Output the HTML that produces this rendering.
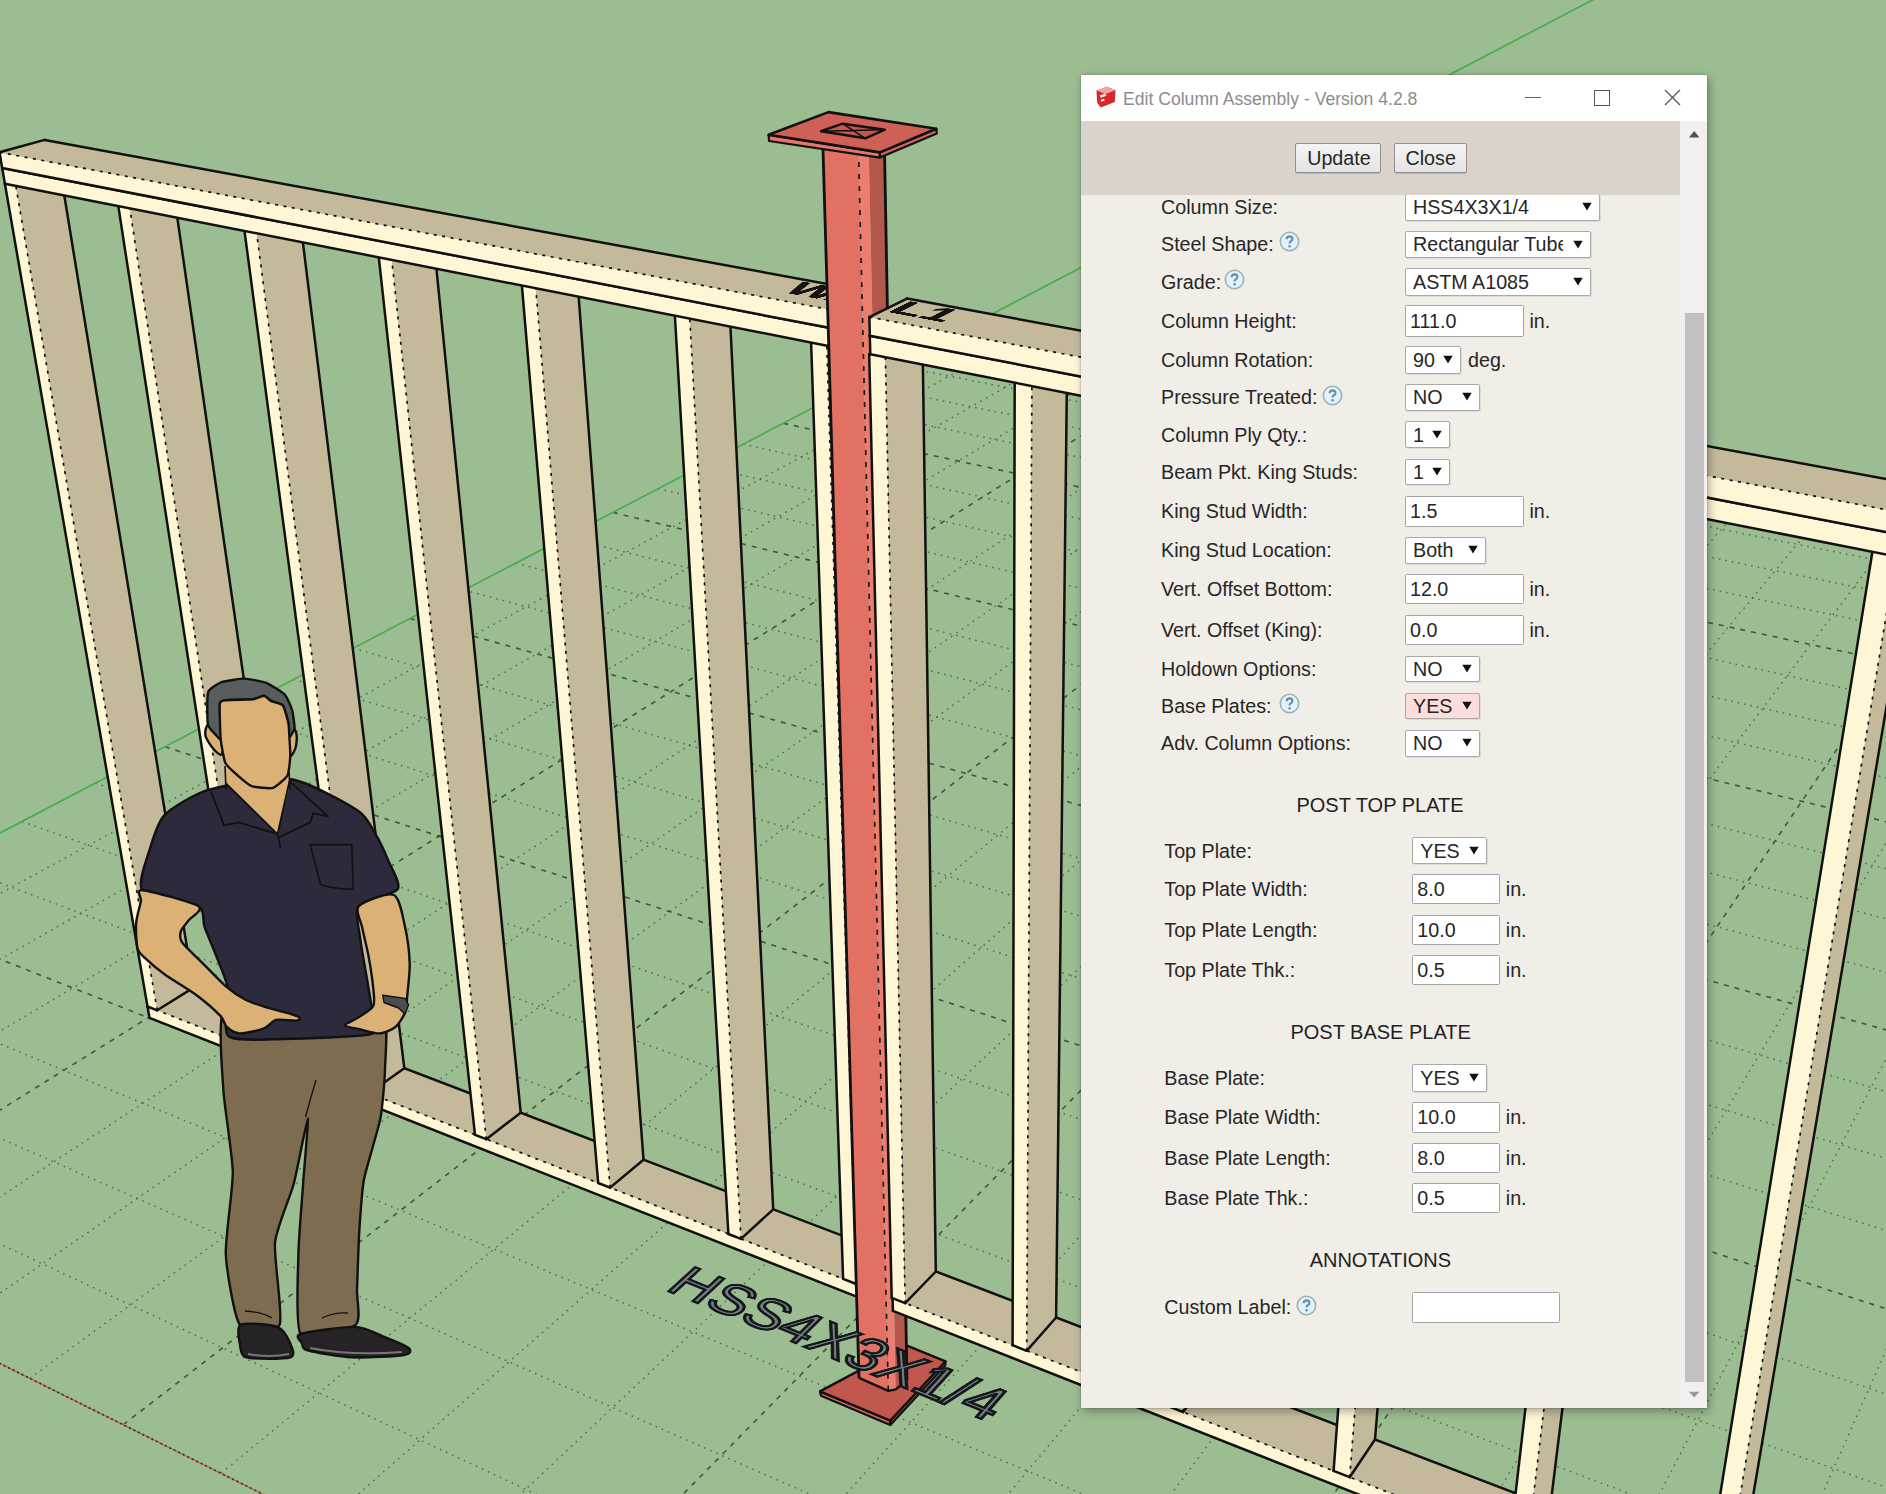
<!DOCTYPE html>
<html><head><meta charset="utf-8">
<style>
html,body{margin:0;padding:0;}
body{width:1886px;height:1494px;overflow:hidden;position:relative;background:#9cbc92;font-family:"Liberation Sans",sans-serif;}
#scene{position:absolute;left:0;top:0;}
.t3{position:absolute;left:0;top:0;transform-origin:0 0;white-space:nowrap;font-family:"Liberation Sans",sans-serif;}
.clipw{position:absolute;left:0;top:0;width:1886px;height:1494px;}
.ab{position:absolute;}
.t{position:absolute;white-space:nowrap;font-family:"Liberation Sans",sans-serif;}
#dlg-shadow{position:absolute;left:1081px;top:75px;width:626px;height:1333px;box-shadow:2px 3px 9px rgba(0,0,0,0.32),0 0 1.5px rgba(0,0,0,0.35);}
#dlg{position:absolute;left:1081px;top:75px;width:626px;height:1333px;background:#f1ede7;}
#titlebar{position:absolute;left:0;top:0;width:626px;height:46px;background:#fff;}
#hdr{position:absolute;left:1081px;top:121px;width:599px;height:74px;background:#dbd3c9;}
.btn{position:absolute;box-sizing:border-box;border:1px solid #8f8f8f;border-radius:2px;background:linear-gradient(#f4f4f4,#e4e4e4);box-shadow:0 1px 0 rgba(0,0,0,0.12);}
#body-clip{position:absolute;left:0;top:0;width:1886px;height:1494px;clip-path:inset(195px 206px 87px 1081px);}
.sel{position:absolute;box-sizing:border-box;border:1px solid #a9a9a9;border-radius:2px;box-shadow:1px 1px 0 rgba(0,0,0,0.08);}
.inp{position:absolute;box-sizing:border-box;border:1.3px solid #a3a3a3;border-radius:1.5px;background:#fff;}
#sbtrack{position:absolute;left:1680px;top:121px;width:27px;height:1287px;background:#f0f0f0;}
#sbthumb{position:absolute;left:1684.5px;top:313px;width:19.5px;height:1069px;background:#c1c1c1;}
</style></head><body>
<svg id="scene" width="1886" height="1494" viewBox="0 0 1886 1494">
<line x1="-451.1" y1="1139.4" x2="982.9" y2="357.8" stroke="#3a5a36" stroke-width="1.5" stroke-dasharray="1.6 5" opacity="0.75"/>
<line x1="-379.2" y1="1175.1" x2="1038.4" y2="368.5" stroke="#3a5a36" stroke-width="1.5" stroke-dasharray="1.6 5" opacity="0.75"/>
<line x1="-304.3" y1="1212.3" x2="1095.2" y2="379.5" stroke="#3a5a36" stroke-width="1.5" stroke-dasharray="1.6 5" opacity="0.75"/>
<line x1="-226.2" y1="1251.2" x2="1153.3" y2="390.7" stroke="#2f4a2c" stroke-width="1.6" stroke-dasharray="5 6" opacity="0.85"/>
<line x1="-144.6" y1="1291.7" x2="1212.8" y2="402.2" stroke="#3a5a36" stroke-width="1.5" stroke-dasharray="1.6 5" opacity="0.75"/>
<line x1="-59.3" y1="1334.1" x2="1273.7" y2="414.0" stroke="#3a5a36" stroke-width="1.5" stroke-dasharray="1.6 5" opacity="0.75"/>
<line x1="29.8" y1="1378.3" x2="1336.0" y2="426.0" stroke="#3a5a36" stroke-width="1.5" stroke-dasharray="1.6 5" opacity="0.75"/>
<line x1="123.2" y1="1424.7" x2="1399.8" y2="438.4" stroke="#2f4a2c" stroke-width="1.6" stroke-dasharray="5 6" opacity="0.85"/>
<line x1="221.0" y1="1473.3" x2="1465.2" y2="451.0" stroke="#3a5a36" stroke-width="1.5" stroke-dasharray="1.6 5" opacity="0.75"/>
<line x1="323.7" y1="1524.4" x2="1532.3" y2="464.0" stroke="#3a5a36" stroke-width="1.5" stroke-dasharray="1.6 5" opacity="0.75"/>
<line x1="431.6" y1="1577.9" x2="1601.0" y2="477.2" stroke="#3a5a36" stroke-width="1.5" stroke-dasharray="1.6 5" opacity="0.75"/>
<line x1="545.1" y1="1634.3" x2="1671.4" y2="490.9" stroke="#2f4a2c" stroke-width="1.6" stroke-dasharray="5 6" opacity="0.85"/>
<line x1="664.6" y1="1693.7" x2="1743.7" y2="504.8" stroke="#3a5a36" stroke-width="1.5" stroke-dasharray="1.6 5" opacity="0.75"/>
<line x1="790.7" y1="1756.3" x2="1817.9" y2="519.2" stroke="#3a5a36" stroke-width="1.5" stroke-dasharray="1.6 5" opacity="0.75"/>
<line x1="923.9" y1="1822.5" x2="1894.0" y2="533.9" stroke="#3a5a36" stroke-width="1.5" stroke-dasharray="1.6 5" opacity="0.75"/>
<line x1="1064.8" y1="1892.5" x2="1972.2" y2="549.0" stroke="#2f4a2c" stroke-width="1.6" stroke-dasharray="5 6" opacity="0.85"/>
<line x1="1214.1" y1="1966.7" x2="2052.4" y2="564.5" stroke="#3a5a36" stroke-width="1.5" stroke-dasharray="1.6 5" opacity="0.75"/>
<line x1="1372.5" y1="2045.4" x2="2134.9" y2="580.4" stroke="#3a5a36" stroke-width="1.5" stroke-dasharray="1.6 5" opacity="0.75"/>
<line x1="1541.1" y1="2129.1" x2="2219.7" y2="596.8" stroke="#3a5a36" stroke-width="1.5" stroke-dasharray="1.6 5" opacity="0.75"/>
<line x1="1720.6" y1="2218.3" x2="2306.9" y2="613.7" stroke="#2f4a2c" stroke-width="1.6" stroke-dasharray="5 6" opacity="0.85"/>
<line x1="1912.4" y1="2313.6" x2="2396.6" y2="631.0" stroke="#3a5a36" stroke-width="1.5" stroke-dasharray="1.6 5" opacity="0.75"/>
<line x1="2117.6" y1="2415.5" x2="2488.9" y2="648.9" stroke="#3a5a36" stroke-width="1.5" stroke-dasharray="1.6 5" opacity="0.75"/>
<line x1="2337.7" y1="2524.9" x2="2584.0" y2="667.2" stroke="#3a5a36" stroke-width="1.5" stroke-dasharray="1.6 5" opacity="0.75"/>
<line x1="2574.4" y1="2642.5" x2="2681.9" y2="686.2" stroke="#2f4a2c" stroke-width="1.6" stroke-dasharray="5 6" opacity="0.85"/>
<line x1="2829.6" y1="2769.3" x2="2782.8" y2="705.7" stroke="#3a5a36" stroke-width="1.5" stroke-dasharray="1.6 5" opacity="0.75"/>
<line x1="3105.7" y1="2906.4" x2="2886.8" y2="725.8" stroke="#3a5a36" stroke-width="1.5" stroke-dasharray="1.6 5" opacity="0.75"/>
<line x1="3405.2" y1="3055.2" x2="2994.0" y2="746.5" stroke="#3a5a36" stroke-width="1.5" stroke-dasharray="1.6 5" opacity="0.75"/>
<line x1="3731.4" y1="3217.3" x2="3104.7" y2="767.9" stroke="#2f4a2c" stroke-width="1.6" stroke-dasharray="5 6" opacity="0.85"/>
<line x1="4087.8" y1="3394.3" x2="3219.0" y2="790.0" stroke="#3a5a36" stroke-width="1.5" stroke-dasharray="1.6 5" opacity="0.75"/>
<line x1="4479.0" y1="3588.7" x2="3337.1" y2="812.8" stroke="#3a5a36" stroke-width="1.5" stroke-dasharray="1.6 5" opacity="0.75"/>
<line x1="-415.4" y1="1050.3" x2="4349.0" y2="3272.6" stroke="#3a5a36" stroke-width="1.5" stroke-dasharray="1.6 5" opacity="0.75"/>
<line x1="-317.0" y1="998.8" x2="4237.2" y2="3000.9" stroke="#3a5a36" stroke-width="1.5" stroke-dasharray="1.6 5" opacity="0.75"/>
<line x1="-224.6" y1="950.5" x2="4140.1" y2="2764.7" stroke="#3a5a36" stroke-width="1.5" stroke-dasharray="1.6 5" opacity="0.75"/>
<line x1="-137.6" y1="905.0" x2="4054.8" y2="2557.5" stroke="#2f4a2c" stroke-width="1.6" stroke-dasharray="5 6" opacity="0.85"/>
<line x1="-55.6" y1="862.1" x2="3979.5" y2="2374.4" stroke="#3a5a36" stroke-width="1.5" stroke-dasharray="1.6 5" opacity="0.75"/>
<line x1="22.0" y1="821.5" x2="3912.4" y2="2211.2" stroke="#3a5a36" stroke-width="1.5" stroke-dasharray="1.6 5" opacity="0.75"/>
<line x1="95.3" y1="783.1" x2="3852.2" y2="2065.0" stroke="#3a5a36" stroke-width="1.5" stroke-dasharray="1.6 5" opacity="0.75"/>
<line x1="164.9" y1="746.7" x2="3798.0" y2="1933.2" stroke="#2f4a2c" stroke-width="1.6" stroke-dasharray="5 6" opacity="0.85"/>
<line x1="230.8" y1="712.2" x2="3748.9" y2="1813.9" stroke="#3a5a36" stroke-width="1.5" stroke-dasharray="1.6 5" opacity="0.75"/>
<line x1="293.5" y1="679.4" x2="3704.2" y2="1705.2" stroke="#3a5a36" stroke-width="1.5" stroke-dasharray="1.6 5" opacity="0.75"/>
<line x1="353.2" y1="648.2" x2="3663.3" y2="1605.8" stroke="#3a5a36" stroke-width="1.5" stroke-dasharray="1.6 5" opacity="0.75"/>
<line x1="410.0" y1="618.5" x2="3625.8" y2="1514.7" stroke="#2f4a2c" stroke-width="1.6" stroke-dasharray="5 6" opacity="0.85"/>
<line x1="464.3" y1="590.1" x2="3591.3" y2="1430.7" stroke="#3a5a36" stroke-width="1.5" stroke-dasharray="1.6 5" opacity="0.75"/>
<line x1="516.0" y1="563.1" x2="3559.4" y2="1353.2" stroke="#3a5a36" stroke-width="1.5" stroke-dasharray="1.6 5" opacity="0.75"/>
<line x1="565.5" y1="537.2" x2="3529.8" y2="1281.3" stroke="#3a5a36" stroke-width="1.5" stroke-dasharray="1.6 5" opacity="0.75"/>
<line x1="612.8" y1="512.4" x2="3502.3" y2="1214.5" stroke="#2f4a2c" stroke-width="1.6" stroke-dasharray="5 6" opacity="0.85"/>
<line x1="658.1" y1="488.7" x2="3476.7" y2="1152.3" stroke="#3a5a36" stroke-width="1.5" stroke-dasharray="1.6 5" opacity="0.75"/>
<line x1="701.6" y1="466.0" x2="3452.8" y2="1094.2" stroke="#3a5a36" stroke-width="1.5" stroke-dasharray="1.6 5" opacity="0.75"/>
<line x1="743.2" y1="444.2" x2="3430.5" y2="1039.8" stroke="#3a5a36" stroke-width="1.5" stroke-dasharray="1.6 5" opacity="0.75"/>
<line x1="783.2" y1="423.3" x2="3409.5" y2="988.8" stroke="#2f4a2c" stroke-width="1.6" stroke-dasharray="5 6" opacity="0.85"/>
<line x1="821.7" y1="403.2" x2="3389.7" y2="940.8" stroke="#3a5a36" stroke-width="1.5" stroke-dasharray="1.6 5" opacity="0.75"/>
<line x1="858.7" y1="383.8" x2="3371.2" y2="895.7" stroke="#3a5a36" stroke-width="1.5" stroke-dasharray="1.6 5" opacity="0.75"/>
<line x1="894.3" y1="365.2" x2="3353.6" y2="853.1" stroke="#3a5a36" stroke-width="1.5" stroke-dasharray="1.6 5" opacity="0.75"/>
<line x1="928.6" y1="347.3" x2="3337.1" y2="812.8" stroke="#2f4a2c" stroke-width="1.6" stroke-dasharray="5 6" opacity="0.85"/>
<line x1="-520.2" y1="1105.1" x2="6111.7" y2="4399.8" stroke="#c9603a" stroke-width="1.2"/>
<line x1="-520.2" y1="1105.1" x2="6111.7" y2="4399.8" stroke="#2a3a26" stroke-width="1.8" stroke-dasharray="1.8 3.2"/>
<line x1="-520.2" y1="1105.1" x2="2095.0" y2="-262.9" stroke="#41b049" stroke-width="1.6"/>
<polygon points="149.5,1017.9 857.9,1297.2 857.5,1284.5 147.5,1006.5" fill="#fef6d5"/>
<polygon points="147.5,1006.5 857.5,1284.5 888.6,1253.4 184.0,983.9" fill="#c4ba9b"/>
<line x1="184.0" y1="983.9" x2="888.6" y2="1253.4" stroke="#111" stroke-width="2.5" stroke-linecap="round"/>
<line x1="147.5" y1="1006.5" x2="857.5" y2="1284.5" stroke="#111" stroke-width="1.7" stroke-dasharray="3 5.5"/>
<line x1="147.5" y1="1006.5" x2="184.0" y2="983.9" stroke="#111" stroke-width="2.5" stroke-linecap="round"/>
<line x1="149.5" y1="1017.9" x2="857.9" y2="1297.2" stroke="#111" stroke-width="2.5" stroke-linecap="round"/>
<line x1="149.5" y1="1017.9" x2="147.5" y2="1006.5" stroke="#111" stroke-width="2.5" stroke-linecap="round"/>
<polygon points="147.5,1006.5 157.2,1010.3 15.8,185.8 4.9,183.7" fill="#fef6d5"/>
<polygon points="157.2,1010.3 193.6,987.6 60.6,172.8 15.8,185.8" fill="#c4ba9b"/>
<line x1="193.6" y1="987.6" x2="60.6" y2="172.8" stroke="#111" stroke-width="2.5" stroke-linecap="round"/>
<line x1="157.2" y1="1010.3" x2="193.6" y2="987.6" stroke="#111" stroke-width="2.5" stroke-linecap="round"/>
<line x1="157.2" y1="1010.3" x2="15.8" y2="185.8" stroke="#111" stroke-width="1.7" stroke-dasharray="3 5.5"/>
<line x1="147.5" y1="1006.5" x2="4.9" y2="183.7" stroke="#111" stroke-width="2.5" stroke-linecap="round"/>
<line x1="147.5" y1="1006.5" x2="157.2" y2="1010.3" stroke="#111" stroke-width="2.5" stroke-linecap="round"/>
<polygon points="247.8,1045.8 257.9,1049.8 129.8,208.3 118.3,206.0" fill="#fef6d5"/>
<polygon points="257.9,1049.8 293.8,1025.9 174.0,194.6 129.8,208.3" fill="#c4ba9b"/>
<line x1="293.8" y1="1025.9" x2="174.0" y2="194.6" stroke="#111" stroke-width="2.5" stroke-linecap="round"/>
<line x1="257.9" y1="1049.8" x2="293.8" y2="1025.9" stroke="#111" stroke-width="2.5" stroke-linecap="round"/>
<line x1="257.9" y1="1049.8" x2="129.8" y2="208.3" stroke="#111" stroke-width="1.7" stroke-dasharray="3 5.5"/>
<line x1="247.8" y1="1045.8" x2="118.3" y2="206.0" stroke="#111" stroke-width="2.5" stroke-linecap="round"/>
<line x1="247.8" y1="1045.8" x2="257.9" y2="1049.8" stroke="#111" stroke-width="2.5" stroke-linecap="round"/>
<polygon points="358.4,1089.1 369.1,1093.3 256.7,233.3 244.5,230.9" fill="#fef6d5"/>
<polygon points="369.1,1093.3 404.3,1068.2 300.0,218.7 256.7,233.3" fill="#c4ba9b"/>
<line x1="404.3" y1="1068.2" x2="300.0" y2="218.7" stroke="#111" stroke-width="2.5" stroke-linecap="round"/>
<line x1="369.1" y1="1093.3" x2="404.3" y2="1068.2" stroke="#111" stroke-width="2.5" stroke-linecap="round"/>
<line x1="369.1" y1="1093.3" x2="256.7" y2="233.3" stroke="#111" stroke-width="1.7" stroke-dasharray="3 5.5"/>
<line x1="358.4" y1="1089.1" x2="244.5" y2="230.9" stroke="#111" stroke-width="2.5" stroke-linecap="round"/>
<line x1="358.4" y1="1089.1" x2="369.1" y2="1093.3" stroke="#111" stroke-width="2.5" stroke-linecap="round"/>
<polygon points="475.0,1134.8 486.3,1139.2 391.8,259.9 378.8,257.4" fill="#fef6d5"/>
<polygon points="486.3,1139.2 520.7,1112.7 434.0,244.4 391.8,259.9" fill="#c4ba9b"/>
<line x1="520.7" y1="1112.7" x2="434.0" y2="244.4" stroke="#111" stroke-width="2.5" stroke-linecap="round"/>
<line x1="486.3" y1="1139.2" x2="520.7" y2="1112.7" stroke="#111" stroke-width="2.5" stroke-linecap="round"/>
<line x1="486.3" y1="1139.2" x2="391.8" y2="259.9" stroke="#111" stroke-width="1.7" stroke-dasharray="3 5.5"/>
<line x1="475.0" y1="1134.8" x2="378.8" y2="257.4" stroke="#111" stroke-width="2.5" stroke-linecap="round"/>
<line x1="475.0" y1="1134.8" x2="486.3" y2="1139.2" stroke="#111" stroke-width="2.5" stroke-linecap="round"/>
<polygon points="598.2,1183.0 610.1,1187.6 535.8,288.3 521.9,285.6" fill="#fef6d5"/>
<polygon points="610.1,1187.6 643.5,1159.7 576.8,271.8 535.8,288.3" fill="#c4ba9b"/>
<line x1="643.5" y1="1159.7" x2="576.8" y2="271.8" stroke="#111" stroke-width="2.5" stroke-linecap="round"/>
<line x1="610.1" y1="1187.6" x2="643.5" y2="1159.7" stroke="#111" stroke-width="2.5" stroke-linecap="round"/>
<line x1="610.1" y1="1187.6" x2="535.8" y2="288.3" stroke="#111" stroke-width="1.7" stroke-dasharray="3 5.5"/>
<line x1="598.2" y1="1183.0" x2="521.9" y2="285.6" stroke="#111" stroke-width="2.5" stroke-linecap="round"/>
<line x1="598.2" y1="1183.0" x2="610.1" y2="1187.6" stroke="#111" stroke-width="2.5" stroke-linecap="round"/>
<polygon points="728.4,1234.0 741.0,1238.9 689.8,318.7 674.9,315.7" fill="#fef6d5"/>
<polygon points="741.0,1238.9 773.2,1209.3 729.2,301.0 689.8,318.7" fill="#c4ba9b"/>
<line x1="773.2" y1="1209.3" x2="729.2" y2="301.0" stroke="#111" stroke-width="2.5" stroke-linecap="round"/>
<line x1="741.0" y1="1238.9" x2="773.2" y2="1209.3" stroke="#111" stroke-width="2.5" stroke-linecap="round"/>
<line x1="741.0" y1="1238.9" x2="689.8" y2="318.7" stroke="#111" stroke-width="1.7" stroke-dasharray="3 5.5"/>
<line x1="728.4" y1="1234.0" x2="674.9" y2="315.7" stroke="#111" stroke-width="2.5" stroke-linecap="round"/>
<line x1="728.4" y1="1234.0" x2="741.0" y2="1238.9" stroke="#111" stroke-width="2.5" stroke-linecap="round"/>
<polygon points="843.1,1278.8 856.3,1284.0 826.8,345.7 811.1,342.5" fill="#fef6d5"/>
<polygon points="856.3,1284.0 887.4,1253.0 864.7,326.9 826.8,345.7" fill="#c4ba9b"/>
<line x1="887.4" y1="1253.0" x2="864.7" y2="326.9" stroke="#111" stroke-width="2.5" stroke-linecap="round"/>
<line x1="856.3" y1="1284.0" x2="887.4" y2="1253.0" stroke="#111" stroke-width="2.5" stroke-linecap="round"/>
<line x1="856.3" y1="1284.0" x2="826.8" y2="345.7" stroke="#111" stroke-width="1.7" stroke-dasharray="3 5.5"/>
<line x1="843.1" y1="1278.8" x2="811.1" y2="342.5" stroke="#111" stroke-width="2.5" stroke-linecap="round"/>
<line x1="843.1" y1="1278.8" x2="856.3" y2="1284.0" stroke="#111" stroke-width="2.5" stroke-linecap="round"/>
<polygon points="4.9,183.7 828.3,345.9 827.7,327.6 2.2,168.1" fill="#fef6d5"/>
<line x1="2.2" y1="168.1" x2="827.7" y2="327.6" stroke="#111" stroke-width="2.5" stroke-linecap="round"/>
<line x1="4.9" y1="183.7" x2="828.3" y2="345.9" stroke="#111" stroke-width="2.5" stroke-linecap="round"/>
<line x1="4.9" y1="183.7" x2="2.2" y2="168.1" stroke="#111" stroke-width="2.5" stroke-linecap="round"/>
<polygon points="2.2,168.1 827.7,327.6 827.2,309.1 -0.5,152.3" fill="#fef6d5"/>
<polygon points="-0.5,152.3 827.2,309.1 865.3,291.0 44.7,139.9" fill="#c4ba9b"/>
<line x1="44.7" y1="139.9" x2="865.3" y2="291.0" stroke="#111" stroke-width="2.5" stroke-linecap="round"/>
<line x1="-0.5" y1="152.3" x2="827.2" y2="309.1" stroke="#111" stroke-width="1.7" stroke-dasharray="3 5.5"/>
<line x1="-0.5" y1="152.3" x2="44.7" y2="139.9" stroke="#111" stroke-width="2.5" stroke-linecap="round"/>
<line x1="2.2" y1="168.1" x2="827.7" y2="327.6" stroke="#111" stroke-width="2.5" stroke-linecap="round"/>
<line x1="2.2" y1="168.1" x2="-0.5" y2="152.3" stroke="#111" stroke-width="2.5" stroke-linecap="round"/>
<polygon points="820.0,1391.4 890.3,1420.6 890.3,1425.0 821.0,1395.8" fill="#d86b5f" stroke="#111" stroke-width="2.2" stroke-linejoin="round"/>
<polygon points="890.3,1420.6 945.5,1361.3 945.3,1365.5 890.3,1425.0" fill="#c95f55" stroke="#111" stroke-width="2.2" stroke-linejoin="round"/>
<polygon points="820.0,1391.4 906.4,1345.3 945.5,1361.3 890.3,1420.6" fill="#c2574d" stroke="#111" stroke-width="2.4" stroke-linejoin="round"/>
<polygon points="868.7,150.0 884.5,150.0 907.0,1380.4 895.8,1389.4" fill="#b4584e"/>
<polygon points="858.5,150.0 868.7,150.0 895.8,1389.4 888.3,1390.9" fill="#ec7e6f"/>
<polygon points="823.0,150.0 858.5,150.0 888.3,1390.9 859.0,1377.9" fill="#e27163"/>
<line x1="823.0" y1="150" x2="859.0" y2="1377.9" stroke="#111" stroke-width="2.8"/>
<line x1="884.5" y1="150" x2="907.0" y2="1380.4" stroke="#111" stroke-width="2.8"/>
<line x1="858.5" y1="150" x2="888.3" y2="1390.9" stroke="#111" stroke-width="1.6" stroke-dasharray="5 7"/>
<polyline points="859.0,1377.9 888.3,1390.9 895.8,1389.4 907.0,1380.4" fill="none" stroke="#111" stroke-width="2.4" stroke-linejoin="round"/>
<polygon points="768.6,134.8 879.9,152.4 879.9,157.6 769.1,141.0" fill="#e77668" stroke="#111" stroke-width="2.2" stroke-linejoin="round"/>
<polygon points="879.9,152.4 936.3,128.7 936.8,133.4 879.9,157.6" fill="#d4665a" stroke="#111" stroke-width="2.2" stroke-linejoin="round"/>
<polygon points="768.6,134.8 828.5,112.1 936.3,128.7 879.9,152.4" fill="#cf6055" stroke="#111" stroke-width="2.6" stroke-linejoin="round"/>
<polygon points="821.0,131.2 842.6,123.7 884.9,129.7 865.3,138.3" fill="#c4574e" stroke="#111" stroke-width="2.4" stroke-linejoin="round"/>
<path d="M821 131.2 L884.9 129.7 M842.6 123.7 L865.3 138.3" stroke="#111" stroke-width="1.6" fill="none"/>
<polygon points="892.9,1310.9 1716.9,1635.7 1719.2,1621.9 892.6,1298.2" fill="#fef6d5"/>
<polygon points="892.6,1298.2 1719.2,1621.9 1739.1,1578.8 923.4,1266.7" fill="#c4ba9b"/>
<line x1="923.4" y1="1266.7" x2="1739.1" y2="1578.8" stroke="#111" stroke-width="2.5" stroke-linecap="round"/>
<line x1="892.6" y1="1298.2" x2="1719.2" y2="1621.9" stroke="#111" stroke-width="1.7" stroke-dasharray="3 5.5"/>
<line x1="892.6" y1="1298.2" x2="923.4" y2="1266.7" stroke="#111" stroke-width="2.5" stroke-linecap="round"/>
<line x1="892.9" y1="1310.9" x2="1716.9" y2="1635.7" stroke="#111" stroke-width="2.5" stroke-linecap="round"/>
<line x1="892.9" y1="1310.9" x2="892.6" y2="1298.2" stroke="#111" stroke-width="2.5" stroke-linecap="round"/>
<polygon points="891.7,1297.9 905.2,1303.2 885.4,357.2 869.2,354.0" fill="#fef6d5"/>
<polygon points="905.2,1303.2 935.8,1271.5 922.5,338.0 885.4,357.2" fill="#c4ba9b"/>
<line x1="935.8" y1="1271.5" x2="922.5" y2="338.0" stroke="#111" stroke-width="2.5" stroke-linecap="round"/>
<line x1="905.2" y1="1303.2" x2="935.8" y2="1271.5" stroke="#111" stroke-width="2.5" stroke-linecap="round"/>
<line x1="905.2" y1="1303.2" x2="885.4" y2="357.2" stroke="#111" stroke-width="1.7" stroke-dasharray="3 5.5"/>
<line x1="891.7" y1="1297.9" x2="869.2" y2="354.0" stroke="#111" stroke-width="2.5" stroke-linecap="round"/>
<line x1="891.7" y1="1297.9" x2="905.2" y2="1303.2" stroke="#111" stroke-width="2.5" stroke-linecap="round"/>
<polygon points="1012.6,1345.2 1026.7,1350.8 1031.9,386.1 1014.7,382.7" fill="#fef6d5"/>
<polygon points="1026.7,1350.8 1056.1,1317.5 1067.1,365.7 1031.9,386.1" fill="#c4ba9b"/>
<line x1="1056.1" y1="1317.5" x2="1067.1" y2="365.7" stroke="#111" stroke-width="2.5" stroke-linecap="round"/>
<line x1="1026.7" y1="1350.8" x2="1056.1" y2="1317.5" stroke="#111" stroke-width="2.5" stroke-linecap="round"/>
<line x1="1026.7" y1="1350.8" x2="1031.9" y2="386.1" stroke="#111" stroke-width="1.7" stroke-dasharray="3 5.5"/>
<line x1="1012.6" y1="1345.2" x2="1014.7" y2="382.7" stroke="#111" stroke-width="2.5" stroke-linecap="round"/>
<line x1="1012.6" y1="1345.2" x2="1026.7" y2="1350.8" stroke="#111" stroke-width="2.5" stroke-linecap="round"/>
<polygon points="1168.0,1406.1 1183.1,1412.0 1222.6,423.7 1204.1,420.0" fill="#fef6d5"/>
<polygon points="1183.1,1412.0 1210.6,1376.6 1255.1,401.7 1222.6,423.7" fill="#c4ba9b"/>
<line x1="1210.6" y1="1376.6" x2="1255.1" y2="401.7" stroke="#111" stroke-width="2.5" stroke-linecap="round"/>
<line x1="1183.1" y1="1412.0" x2="1210.6" y2="1376.6" stroke="#111" stroke-width="2.5" stroke-linecap="round"/>
<line x1="1183.1" y1="1412.0" x2="1222.6" y2="423.7" stroke="#111" stroke-width="1.7" stroke-dasharray="3 5.5"/>
<line x1="1168.0" y1="1406.1" x2="1204.1" y2="420.0" stroke="#111" stroke-width="2.5" stroke-linecap="round"/>
<line x1="1168.0" y1="1406.1" x2="1183.1" y2="1412.0" stroke="#111" stroke-width="2.5" stroke-linecap="round"/>
<polygon points="1333.6,1470.9 1349.7,1477.2 1428.5,464.2 1408.5,460.3" fill="#fef6d5"/>
<polygon points="1349.7,1477.2 1375.0,1439.5 1457.8,440.6 1428.5,464.2" fill="#c4ba9b"/>
<line x1="1375.0" y1="1439.5" x2="1457.8" y2="440.6" stroke="#111" stroke-width="2.5" stroke-linecap="round"/>
<line x1="1349.7" y1="1477.2" x2="1375.0" y2="1439.5" stroke="#111" stroke-width="2.5" stroke-linecap="round"/>
<line x1="1349.7" y1="1477.2" x2="1428.5" y2="464.2" stroke="#111" stroke-width="1.7" stroke-dasharray="3 5.5"/>
<line x1="1333.6" y1="1470.9" x2="1408.5" y2="460.3" stroke="#111" stroke-width="2.5" stroke-linecap="round"/>
<line x1="1333.6" y1="1470.9" x2="1349.7" y2="1477.2" stroke="#111" stroke-width="2.5" stroke-linecap="round"/>
<polygon points="1510.2,1540.1 1527.4,1546.8 1651.6,508.2 1629.9,503.9" fill="#fef6d5"/>
<polygon points="1527.4,1546.8 1550.3,1506.6 1676.9,482.6 1651.6,508.2" fill="#c4ba9b"/>
<line x1="1550.3" y1="1506.6" x2="1676.9" y2="482.6" stroke="#111" stroke-width="2.5" stroke-linecap="round"/>
<line x1="1527.4" y1="1546.8" x2="1550.3" y2="1506.6" stroke="#111" stroke-width="2.5" stroke-linecap="round"/>
<line x1="1527.4" y1="1546.8" x2="1651.6" y2="508.2" stroke="#111" stroke-width="1.7" stroke-dasharray="3 5.5"/>
<line x1="1510.2" y1="1540.1" x2="1629.9" y2="503.9" stroke="#111" stroke-width="2.5" stroke-linecap="round"/>
<line x1="1510.2" y1="1540.1" x2="1527.4" y2="1546.8" stroke="#111" stroke-width="2.5" stroke-linecap="round"/>
<polygon points="1700.8,1614.7 1719.2,1621.9 1896.0,556.4 1872.4,551.7" fill="#fef6d5"/>
<polygon points="1719.2,1621.9 1739.1,1578.8 1916.6,528.5 1896.0,556.4" fill="#c4ba9b"/>
<line x1="1739.1" y1="1578.8" x2="1916.6" y2="528.5" stroke="#111" stroke-width="2.5" stroke-linecap="round"/>
<line x1="1719.2" y1="1621.9" x2="1739.1" y2="1578.8" stroke="#111" stroke-width="2.5" stroke-linecap="round"/>
<line x1="1719.2" y1="1621.9" x2="1896.0" y2="556.4" stroke="#111" stroke-width="1.7" stroke-dasharray="3 5.5"/>
<line x1="1700.8" y1="1614.7" x2="1872.4" y2="551.7" stroke="#111" stroke-width="2.5" stroke-linecap="round"/>
<line x1="1700.8" y1="1614.7" x2="1719.2" y2="1621.9" stroke="#111" stroke-width="2.5" stroke-linecap="round"/>
<polygon points="870.3,354.2 1896.0,556.4 1899.6,534.7 869.8,335.7" fill="#fef6d5"/>
<line x1="869.8" y1="335.7" x2="1899.6" y2="534.7" stroke="#111" stroke-width="2.5" stroke-linecap="round"/>
<line x1="870.3" y1="354.2" x2="1896.0" y2="556.4" stroke="#111" stroke-width="2.5" stroke-linecap="round"/>
<line x1="870.3" y1="354.2" x2="869.8" y2="335.7" stroke="#111" stroke-width="2.5" stroke-linecap="round"/>
<polygon points="869.8,335.7 1899.6,534.7 1903.2,512.9 869.4,317.1" fill="#fef6d5"/>
<polygon points="869.4,317.1 1903.2,512.9 1923.8,485.9 907.0,298.6" fill="#c4ba9b"/>
<line x1="907.0" y1="298.6" x2="1923.8" y2="485.9" stroke="#111" stroke-width="2.5" stroke-linecap="round"/>
<line x1="869.4" y1="317.1" x2="1903.2" y2="512.9" stroke="#111" stroke-width="1.7" stroke-dasharray="3 5.5"/>
<line x1="869.4" y1="317.1" x2="907.0" y2="298.6" stroke="#111" stroke-width="2.5" stroke-linecap="round"/>
<line x1="869.8" y1="335.7" x2="1899.6" y2="534.7" stroke="#111" stroke-width="2.5" stroke-linecap="round"/>
<line x1="869.8" y1="335.7" x2="869.4" y2="317.1" stroke="#111" stroke-width="2.5" stroke-linecap="round"/>
<path d="M223.4 1012.0 C229.5 1004.5 274.5 1014.4 284.3 1015.0 C294.1 1015.6 311.9 1018.3 321.8 1018.0 C331.7 1017.7 376.5 1007.1 382.8 1012.0 C389.1 1016.9 385.3 1056.3 385.1 1066.9 C384.9 1077.5 382.5 1107.2 380.4 1118.4 C378.3 1129.6 366.1 1168.0 364.0 1179.3 C361.9 1190.5 360.0 1219.9 359.3 1230.9 C358.6 1241.9 357.4 1280.0 357.0 1289.4 C356.6 1298.8 361.4 1320.1 355.8 1324.6 C350.2 1329.1 306.4 1341.0 300.7 1334.0 C295.0 1327.0 298.2 1269.3 298.4 1254.3 C298.6 1239.3 302.2 1197.6 303.1 1184.0 C304.0 1170.4 308.7 1118.4 307.8 1118.4 C306.9 1118.4 297.0 1171.6 293.7 1184.0 C290.4 1196.4 276.4 1228.5 275.0 1242.6 C273.6 1256.7 283.2 1316.4 279.7 1324.6 C276.2 1332.8 245.2 1331.6 239.8 1324.6 C234.4 1317.6 226.5 1269.5 225.8 1254.3 C225.1 1239.1 233.0 1188.7 232.8 1172.3 C232.6 1155.9 224.3 1106.3 223.4 1090.3 C222.5 1074.3 217.3 1019.5 223.4 1012.0 Z" fill="#7d6c50" stroke="#111" stroke-width="2.4" stroke-linejoin="round"/>
<path d="M241.0 1324.6 C246.0 1322.4 270.7 1324.4 277.3 1326.9 C283.9 1329.4 288.5 1339.2 290.2 1343.3 C291.9 1347.4 296.0 1355.5 290.2 1357.4 C284.4 1359.3 253.6 1359.3 246.9 1357.4 C240.2 1355.5 240.6 1347.7 239.8 1343.3 C239.0 1338.9 236.0 1326.8 241.0 1324.6 Z" fill="#262326" stroke="#111" stroke-width="2.4" stroke-linejoin="round"/>
<path d="M300.7 1334.0 C307.7 1331.8 343.7 1326.6 354.6 1326.9 C365.5 1327.2 375.6 1333.5 382.8 1336.3 C390.0 1339.1 405.7 1345.5 408.5 1348.0 C411.3 1350.5 411.3 1353.7 403.8 1355.0 C396.3 1356.3 365.1 1358.0 352.3 1357.4 C339.5 1356.8 314.5 1352.3 307.8 1350.4 C301.1 1348.5 302.9 1345.5 302.0 1343.3 C301.1 1341.1 293.7 1336.2 300.7 1334.0 Z" fill="#262326" stroke="#111" stroke-width="2.4" stroke-linejoin="round"/>
<path d="M248 1354 Q270 1358 289 1354 M310 1348 Q350 1356 402 1352" stroke="#77767a" stroke-width="2" fill="none"/>
<path d="M316 1080 Q310 1100 305.5 1117 M245 1311 Q262 1312 272 1318 M322 1318 Q335 1312 348 1313" stroke="#111" stroke-width="1.3" fill="none"/>
<path d="M209.2 789.7 C194.5 793.9 171.6 808.0 164.7 814.9 C157.8 821.8 152.4 840.3 149.8 849.1 C147.2 857.9 136.8 884.0 142.4 890.6 C148.0 897.2 191.0 901.9 198.2 906.1 C205.4 910.3 202.3 920.7 204.5 926.8 C206.7 932.9 214.5 951.2 217.3 958.6 C220.1 966.0 227.1 981.4 228.4 990.4 C229.7 999.4 221.9 1030.3 228.4 1036.0 C234.9 1041.7 267.5 1039.2 284.0 1039.0 C300.5 1038.8 359.6 1036.7 370.0 1034.4 C380.4 1032.1 373.3 1024.6 373.1 1019.1 C372.9 1013.6 369.9 996.5 368.4 987.2 C366.9 977.9 361.5 949.0 360.4 939.5 C359.3 930.0 354.4 912.0 358.8 906.1 C363.2 900.2 394.4 894.4 397.8 889.0 C401.2 883.6 390.6 866.4 388.0 860.0 C385.4 853.6 379.0 840.0 375.5 834.2 C372.0 828.4 367.6 816.9 357.7 810.5 C347.8 804.1 308.2 781.7 290.9 779.3 C273.6 776.9 223.9 785.5 209.2 789.7 Z" fill="#2c2a3b" stroke="#111" stroke-width="2.4" stroke-linejoin="round"/>
<path d="M224 760 L225.5 783 L277.5 834.2 L289.5 785 L291 760 Z" fill="#dbb176" stroke="none"/>
<path d="M225.5 783 L277.5 834.2 L289.5 781 M210.7 791.2 L224.1 825.3 L238.9 822.4 L277.5 834.2 L280.5 847.6 M290.9 782.3 L328 816.4 L313.1 813.4 L310.2 822.4 L279 837.2" stroke="#111" stroke-width="1.8" fill="none" stroke-linejoin="round"/>
<path d="M310.2 844.6 L351.7 844.6 L353.2 889.2 Q335 889 320.6 884.7 Z" fill="none" stroke="#111" stroke-width="1.6"/>
<path d="M142.5 890.2 C150.1 890.8 192.1 902.1 198.2 906.1 C204.3 910.1 190.9 917.0 188.6 920.4 C186.3 923.8 181.5 928.6 180.7 931.6 C179.9 934.6 179.6 938.7 182.3 942.7 C185.0 946.7 195.4 955.9 201.3 961.8 C207.2 967.7 220.9 982.1 226.8 987.2 C232.7 992.3 240.4 997.2 245.9 1000.0 C251.4 1002.8 262.1 1006.0 268.2 1007.9 C274.3 1009.8 287.8 1012.9 292.0 1014.3 C296.2 1015.7 299.6 1017.4 300.0 1018.3 C300.4 1019.2 298.4 1020.5 295.2 1020.7 C292.0 1020.9 280.3 1018.8 276.1 1019.9 C271.9 1021.0 268.3 1026.8 263.4 1028.6 C258.5 1030.4 244.4 1033.6 239.5 1033.4 C234.6 1033.2 229.3 1029.3 226.8 1027.0 C224.3 1024.7 224.4 1020.1 220.4 1015.9 C216.4 1011.7 204.0 1000.7 196.6 995.2 C189.2 989.7 171.6 979.4 164.8 974.5 C158.0 969.6 149.3 962.0 145.7 958.6 C142.1 955.2 139.0 953.8 137.7 949.1 C136.4 944.4 135.7 930.0 136.1 923.6 C136.5 917.2 140.0 905.9 140.9 901.4 C141.8 896.9 134.9 889.6 142.5 890.2 Z" fill="#dbb176" stroke="#111" stroke-width="2.4" stroke-linejoin="round"/>
<path d="M358.8 906.1 C363.0 901.9 387.6 892.2 393.8 895.0 C400.0 897.8 402.9 917.7 405.0 926.8 C407.1 935.9 409.4 954.3 409.7 963.4 C410.0 972.5 407.9 988.6 407.3 995.2 C406.7 1001.8 406.5 1008.5 404.9 1012.7 C403.3 1016.9 398.8 1024.2 395.4 1027.0 C392.0 1029.8 384.2 1033.1 379.5 1033.4 C374.8 1033.7 365.1 1030.5 360.4 1029.4 C355.7 1028.3 345.1 1026.8 344.5 1025.4 C343.9 1024.0 351.8 1021.6 355.6 1019.1 C359.4 1016.6 370.8 1010.6 373.1 1006.3 C375.4 1002.0 373.7 994.0 373.1 987.2 C372.5 980.4 369.9 963.5 368.4 955.4 C366.9 947.3 363.3 933.4 362.0 926.8 C360.7 920.2 354.6 910.3 358.8 906.1 Z" fill="#dbb176" stroke="#111" stroke-width="2.4" stroke-linejoin="round"/>
<path d="M382.7 995.2 L405.4 998.4 L408.5 1005 L405 1014 L398.5 1008 L384 1002.5 Z" fill="#4b4d50" stroke="#111" stroke-width="1.4" stroke-linejoin="round"/>
<path d="M208.5 724.6 C206.0 725.3 204.7 732.2 205.4 735.5 C206.1 738.8 211.3 746.5 213.5 749.0 C215.7 751.5 220.6 756.5 222.0 754.0 C223.4 751.5 225.8 733.9 224.0 730.0 C222.2 726.1 211.0 723.9 208.5 724.6 Z" fill="#dbb176" stroke="#111" stroke-width="2.4" stroke-linejoin="round"/>
<path d="M292.0 725.0 C293.4 725.7 296.1 731.9 296.6 735.0 C297.1 738.1 296.4 745.2 295.5 748.0 C294.6 750.8 290.8 758.4 289.5 756.0 C288.2 753.6 285.7 734.1 286.0 730.0 C286.3 725.9 290.6 724.3 292.0 725.0 Z" fill="#dbb176" stroke="#111" stroke-width="2.4" stroke-linejoin="round"/>
<path d="M207.8 724.0 C207.3 720.6 206.9 695.6 208.1 692.1 C209.2 688.6 218.6 683.3 221.6 682.2 C224.6 681.1 240.4 678.5 244.2 678.6 C248.0 678.7 263.4 681.8 266.8 683.1 C270.2 684.5 282.8 692.5 284.9 694.8 C287.0 697.1 291.3 707.4 292.1 710.2 C292.9 713.0 294.7 725.7 294.5 728.0 C294.3 730.3 289.9 737.7 289.4 737.3 C288.9 736.9 289.0 726.3 288.5 723.7 C288.0 721.1 284.4 707.5 283.0 705.6 C281.6 703.7 272.9 701.9 271.3 701.1 C269.7 700.3 265.6 695.9 264.1 695.7 C262.6 695.6 256.4 698.9 253.2 699.3 C250.0 699.7 228.9 699.8 226.1 700.2 C223.3 700.6 220.2 700.6 219.8 703.8 C219.4 707.0 222.1 736.7 221.6 739.1 C221.1 741.5 215.2 734.3 214.0 733.0 C212.8 731.7 208.3 727.4 207.8 724.0 Z" fill="#585d5e" stroke="#111" stroke-width="2.4" stroke-linejoin="round"/>
<path d="M219.8 703.8 C220.2 700.6 223.3 700.6 226.1 700.2 C228.9 699.8 250.0 699.7 253.2 699.3 C256.4 698.9 262.6 695.6 264.1 695.7 C265.6 695.9 269.7 700.3 271.3 701.1 C272.9 701.9 281.6 703.7 283.0 705.6 C284.4 707.5 288.0 721.1 288.5 723.7 C289.0 726.3 289.2 734.7 289.4 737.3 C289.5 739.9 290.4 752.1 290.3 755.3 C290.2 758.5 289.0 772.5 287.6 775.2 C286.2 777.9 276.1 787.0 273.1 787.9 C270.1 788.8 254.7 787.4 251.4 786.0 C248.1 784.6 235.6 773.6 233.4 771.6 C231.2 769.6 226.3 765.3 225.2 762.6 C224.1 759.9 221.1 744.0 220.7 739.1 C220.2 734.2 219.4 707.0 219.8 703.8 Z" fill="#dbb176" stroke="#111" stroke-width="2.4" stroke-linejoin="round"/>
<path d="M225 766 L226 790 M289 772 L290 790" stroke="#111" stroke-width="1.6" fill="none"/>
</svg>
<div class="t3" style="transform:matrix3d(0.43252054,0.065182807,0,-0.00010978125,-0.50466936,0.11129004,0,-0.00018331823,0,0,1,0,697.12735,1260.0243,0,1);font-size:100px;line-height:100px;font-weight:normal;color:#767e88;-webkit-text-stroke:5px #15181b;">HSS4X3X1/4</div>
<div class="clipw" style="clip-path:polygon(0 0,826.5px 0,826.5px 400px,0 400px)"><div class="t3" style="transform:matrix3d(0.38061395,0.057360247,0,-9.6606452e-05,-0.44410421,0.097934168,0,-0.00016131829,0,0,1,0,808.17549,279.43369,0,1);font-size:100px;line-height:100px;font-weight:bold;color:#161210;-webkit-text-stroke:2px #161210;">WALL1</div></div>
<div class="clipw" style="clip-path:polygon(872px 319px,908px 298.5px,1080px 200px,1080px 400px,872px 400px)"><div class="t3" style="transform:matrix3d(0.38061395,0.057360247,0,-9.6606452e-05,-0.44410421,0.097934168,0,-0.00016131829,0,0,1,0,808.17549,279.43369,0,1);font-size:100px;line-height:100px;font-weight:bold;color:#161210;-webkit-text-stroke:2px #161210;">WALL1</div></div>

<div id="dlg-shadow"></div>
<div id="dlg">
  <div id="titlebar"></div>
</div>
<svg class="ab" style="left:1094px;top:85px" width="24" height="24" viewBox="0 0 24 24">
  <path d="M2.5 5.5 L13 1.8 L21.5 5.2 L20.8 17 L6.8 22.5 L3.2 17.8 Z" fill="#d8262b"/>
  <path d="M2.5 5.5 L13 1.8 L21.5 5.2 L11.5 9 Z" fill="#f2a3a3"/>
  <path d="M5.5 10.5 L11 8.6 L12.5 10.8 L7 12.8 Z M6.5 15 L10 13.8 L10.8 15.6 L7.3 16.8 Z" fill="#ffe6e6"/>
</svg>
<div class="t" style="left:1123.0px;top:90.9px;font-size:17.6px;line-height:17.6px;color:#8c8c8c;">Edit Column Assembly - Version 4.2.8</div>
<div class="ab" style="left:1525px;top:96.5px;width:16px;height:1.2px;background:#666"></div>
<div class="ab" style="left:1594px;top:90.3px;width:13.5px;height:13.5px;border:1.2px solid #555"></div>
<svg class="ab" style="left:1664px;top:89px" width="17" height="17"><path d="M1 1 L16 16 M16 1 L1 16" stroke="#555" stroke-width="1.3"/></svg>
<div id="hdr"></div>
<div class="btn" style="left:1294.8px;top:142.8px;width:85.9px;height:29.9px"></div>
<div class="t" style="left:1307.2px;top:148.5px;font-size:19.7px;line-height:19.7px;color:#262626;">Update</div>
<div class="btn" style="left:1393.6px;top:142.8px;width:73.9px;height:29.9px"></div>
<div class="t" style="left:1405.5px;top:148.5px;font-size:19.7px;line-height:19.7px;color:#262626;">Close</div>
<div id="body-clip">
<div class="t" style="left:1161.0px;top:197.9px;font-size:19.7px;line-height:19.7px;color:#262626;">Column Size:</div>
<div class="sel" style="left:1405.0px;top:193.5px;width:195.0px;height:27.2px;background:#fff"></div><div class="t" style="left:1413.0px;top:197.9px;font-size:19.7px;line-height:19.7px;color:#262626;">HSS4X3X1/4</div><svg class="ab" style="left:1581.5px;top:202.1px" width="10" height="9"><path d="M0.3 0.8 L9.7 0.8 L5 8.6 Z" fill="#111"/></svg>
<div class="t" style="left:1161.0px;top:235.3px;font-size:19.7px;line-height:19.7px;color:#262626;">Steel Shape:</div>
<div class="sel" style="left:1405.0px;top:230.7px;width:186.0px;height:27.6px;background:#fff"></div><div class="t" style="left:1413.0px;top:235.3px;font-size:19.7px;line-height:19.7px;color:#262626;">Rectangular Tub<span style="display:inline-block;width:6px;overflow:hidden;vertical-align:top">e</span></div><svg class="ab" style="left:1572.5px;top:239.5px" width="10" height="9"><path d="M0.3 0.8 L9.7 0.8 L5 8.6 Z" fill="#111"/></svg>
<svg class="ab" style="left:1278.5px;top:231.1px" width="21" height="21" viewBox="0 0 21 21"><circle cx="10.5" cy="10.5" r="9.2" fill="#def3fb" stroke="#9fb0b3" stroke-width="1.6"/><path d="M7.6 8.2 Q7.8 5.4 10.6 5.4 Q13.4 5.5 13.4 7.9 Q13.4 9.5 11.6 10.4 Q10.6 11 10.6 12.6" fill="none" stroke="#6f8ca6" stroke-width="2.1"/><circle cx="10.6" cy="15.2" r="1.2" fill="#6f8ca6"/></svg>
<div class="t" style="left:1161.0px;top:272.8px;font-size:19.7px;line-height:19.7px;color:#262626;">Grade:</div>
<div class="sel" style="left:1405.0px;top:268.3px;width:186.0px;height:27.4px;background:#fff"></div><div class="t" style="left:1413.0px;top:272.8px;font-size:19.7px;line-height:19.7px;color:#262626;">ASTM A1085</div><svg class="ab" style="left:1572.5px;top:277.0px" width="10" height="9"><path d="M0.3 0.8 L9.7 0.8 L5 8.6 Z" fill="#111"/></svg>
<svg class="ab" style="left:1224.0px;top:268.8px" width="21" height="21" viewBox="0 0 21 21"><circle cx="10.5" cy="10.5" r="9.2" fill="#def3fb" stroke="#9fb0b3" stroke-width="1.6"/><path d="M7.6 8.2 Q7.8 5.4 10.6 5.4 Q13.4 5.5 13.4 7.9 Q13.4 9.5 11.6 10.4 Q10.6 11 10.6 12.6" fill="none" stroke="#6f8ca6" stroke-width="2.1"/><circle cx="10.6" cy="15.2" r="1.2" fill="#6f8ca6"/></svg>
<div class="t" style="left:1161.0px;top:311.8px;font-size:19.7px;line-height:19.7px;color:#262626;">Column Height:</div>
<div class="inp" style="left:1405.0px;top:305.2px;width:118.5px;height:31.6px"></div><div class="t" style="left:1410.0px;top:311.8px;font-size:19.7px;line-height:19.7px;color:#262626;">111.0</div>
<div class="t" style="left:1529.5px;top:311.8px;font-size:19.7px;line-height:19.7px;color:#262626;">in.</div>
<div class="t" style="left:1161.0px;top:350.9px;font-size:19.7px;line-height:19.7px;color:#262626;">Column Rotation:</div>
<div class="sel" style="left:1405.0px;top:346.1px;width:56.0px;height:27.9px;background:#fff"></div><div class="t" style="left:1413.0px;top:350.9px;font-size:19.7px;line-height:19.7px;color:#262626;">90</div><svg class="ab" style="left:1442.5px;top:355.1px" width="10" height="9"><path d="M0.3 0.8 L9.7 0.8 L5 8.6 Z" fill="#111"/></svg>
<div class="t" style="left:1468.0px;top:350.9px;font-size:19.7px;line-height:19.7px;color:#262626;">deg.</div>
<div class="t" style="left:1161.0px;top:388.0px;font-size:19.7px;line-height:19.7px;color:#262626;">Pressure Treated:</div>
<div class="sel" style="left:1405.0px;top:383.7px;width:75.0px;height:27.0px;background:#fff"></div><div class="t" style="left:1413.0px;top:388.0px;font-size:19.7px;line-height:19.7px;color:#262626;">NO</div><svg class="ab" style="left:1461.5px;top:392.2px" width="10" height="9"><path d="M0.3 0.8 L9.7 0.8 L5 8.6 Z" fill="#111"/></svg>
<svg class="ab" style="left:1321.5px;top:384.8px" width="21" height="21" viewBox="0 0 21 21"><circle cx="10.5" cy="10.5" r="9.2" fill="#def3fb" stroke="#9fb0b3" stroke-width="1.6"/><path d="M7.6 8.2 Q7.8 5.4 10.6 5.4 Q13.4 5.5 13.4 7.9 Q13.4 9.5 11.6 10.4 Q10.6 11 10.6 12.6" fill="none" stroke="#6f8ca6" stroke-width="2.1"/><circle cx="10.6" cy="15.2" r="1.2" fill="#6f8ca6"/></svg>
<div class="t" style="left:1161.0px;top:425.6px;font-size:19.7px;line-height:19.7px;color:#262626;">Column Ply Qty.:</div>
<div class="sel" style="left:1405.0px;top:421.3px;width:45.0px;height:27.0px;background:#fff"></div><div class="t" style="left:1413.0px;top:425.6px;font-size:19.7px;line-height:19.7px;color:#262626;">1</div><svg class="ab" style="left:1431.5px;top:429.8px" width="10" height="9"><path d="M0.3 0.8 L9.7 0.8 L5 8.6 Z" fill="#111"/></svg>
<div class="t" style="left:1161.0px;top:462.8px;font-size:19.7px;line-height:19.7px;color:#262626;">Beam Pkt. King Studs:</div>
<div class="sel" style="left:1405.0px;top:458.7px;width:45.0px;height:26.6px;background:#fff"></div><div class="t" style="left:1413.0px;top:462.8px;font-size:19.7px;line-height:19.7px;color:#262626;">1</div><svg class="ab" style="left:1431.5px;top:467.0px" width="10" height="9"><path d="M0.3 0.8 L9.7 0.8 L5 8.6 Z" fill="#111"/></svg>
<div class="t" style="left:1161.0px;top:502.2px;font-size:19.7px;line-height:19.7px;color:#262626;">King Stud Width:</div>
<div class="inp" style="left:1405.0px;top:496.0px;width:118.5px;height:30.7px"></div><div class="t" style="left:1410.0px;top:502.2px;font-size:19.7px;line-height:19.7px;color:#262626;">1.5</div>
<div class="t" style="left:1529.5px;top:502.2px;font-size:19.7px;line-height:19.7px;color:#262626;">in.</div>
<div class="t" style="left:1161.0px;top:541.2px;font-size:19.7px;line-height:19.7px;color:#262626;">King Stud Location:</div>
<div class="sel" style="left:1405.0px;top:536.7px;width:81.0px;height:27.3px;background:#fff"></div><div class="t" style="left:1413.0px;top:541.2px;font-size:19.7px;line-height:19.7px;color:#262626;">Both</div><svg class="ab" style="left:1467.5px;top:545.4px" width="10" height="9"><path d="M0.3 0.8 L9.7 0.8 L5 8.6 Z" fill="#111"/></svg>
<div class="t" style="left:1161.0px;top:580.1px;font-size:19.7px;line-height:19.7px;color:#262626;">Vert. Offset Bottom:</div>
<div class="inp" style="left:1405.0px;top:574.3px;width:118.5px;height:30.0px"></div><div class="t" style="left:1410.0px;top:580.1px;font-size:19.7px;line-height:19.7px;color:#262626;">12.0</div>
<div class="t" style="left:1529.5px;top:580.1px;font-size:19.7px;line-height:19.7px;color:#262626;">in.</div>
<div class="t" style="left:1161.0px;top:620.7px;font-size:19.7px;line-height:19.7px;color:#262626;">Vert. Offset (King):</div>
<div class="inp" style="left:1405.0px;top:615.0px;width:118.5px;height:29.7px"></div><div class="t" style="left:1410.0px;top:620.7px;font-size:19.7px;line-height:19.7px;color:#262626;">0.0</div>
<div class="t" style="left:1529.5px;top:620.7px;font-size:19.7px;line-height:19.7px;color:#262626;">in.</div>
<div class="t" style="left:1161.0px;top:659.8px;font-size:19.7px;line-height:19.7px;color:#262626;">Holdown Options:</div>
<div class="sel" style="left:1405.0px;top:655.7px;width:75.0px;height:26.6px;background:#fff"></div><div class="t" style="left:1413.0px;top:659.8px;font-size:19.7px;line-height:19.7px;color:#262626;">NO</div><svg class="ab" style="left:1461.5px;top:664.0px" width="10" height="9"><path d="M0.3 0.8 L9.7 0.8 L5 8.6 Z" fill="#111"/></svg>
<div class="t" style="left:1161.0px;top:696.8px;font-size:19.7px;line-height:19.7px;color:#262626;">Base Plates:</div>
<div class="sel" style="left:1405.0px;top:692.7px;width:75.0px;height:26.6px;background:#fddcdc"></div><div class="t" style="left:1413.0px;top:696.8px;font-size:19.7px;line-height:19.7px;color:#262626;">YES</div><svg class="ab" style="left:1461.5px;top:701.0px" width="10" height="9"><path d="M0.3 0.8 L9.7 0.8 L5 8.6 Z" fill="#111"/></svg>
<svg class="ab" style="left:1278.5px;top:693.0px" width="21" height="21" viewBox="0 0 21 21"><circle cx="10.5" cy="10.5" r="9.2" fill="#def3fb" stroke="#9fb0b3" stroke-width="1.6"/><path d="M7.6 8.2 Q7.8 5.4 10.6 5.4 Q13.4 5.5 13.4 7.9 Q13.4 9.5 11.6 10.4 Q10.6 11 10.6 12.6" fill="none" stroke="#6f8ca6" stroke-width="2.1"/><circle cx="10.6" cy="15.2" r="1.2" fill="#6f8ca6"/></svg>
<div class="t" style="left:1161.0px;top:734.2px;font-size:19.7px;line-height:19.7px;color:#262626;">Adv. Column Options:</div>
<div class="sel" style="left:1405.0px;top:730.0px;width:75.0px;height:26.7px;background:#fff"></div><div class="t" style="left:1413.0px;top:734.2px;font-size:19.7px;line-height:19.7px;color:#262626;">NO</div><svg class="ab" style="left:1461.5px;top:738.4px" width="10" height="9"><path d="M0.3 0.8 L9.7 0.8 L5 8.6 Z" fill="#111"/></svg>
<div class="t" style="left:1164.3px;top:841.5px;font-size:19.7px;line-height:19.7px;color:#262626;">Top Plate:</div>
<div class="sel" style="left:1412.3px;top:837.3px;width:75.0px;height:26.7px;background:#fff"></div><div class="t" style="left:1420.3px;top:841.5px;font-size:19.7px;line-height:19.7px;color:#262626;">YES</div><svg class="ab" style="left:1468.8px;top:845.6px" width="10" height="9"><path d="M0.3 0.8 L9.7 0.8 L5 8.6 Z" fill="#111"/></svg>
<div class="t" style="left:1164.3px;top:880.1px;font-size:19.7px;line-height:19.7px;color:#262626;">Top Plate Width:</div>
<div class="inp" style="left:1412.3px;top:874.3px;width:87.5px;height:30.0px"></div><div class="t" style="left:1417.3px;top:880.1px;font-size:19.7px;line-height:19.7px;color:#262626;">8.0</div>
<div class="t" style="left:1505.8px;top:880.1px;font-size:19.7px;line-height:19.7px;color:#262626;">in.</div>
<div class="t" style="left:1164.3px;top:920.5px;font-size:19.7px;line-height:19.7px;color:#262626;">Top Plate Length:</div>
<div class="inp" style="left:1412.3px;top:914.7px;width:87.5px;height:30.0px"></div><div class="t" style="left:1417.3px;top:920.5px;font-size:19.7px;line-height:19.7px;color:#262626;">10.0</div>
<div class="t" style="left:1505.8px;top:920.5px;font-size:19.7px;line-height:19.7px;color:#262626;">in.</div>
<div class="t" style="left:1164.3px;top:960.8px;font-size:19.7px;line-height:19.7px;color:#262626;">Top Plate Thk.:</div>
<div class="inp" style="left:1412.3px;top:955.0px;width:87.5px;height:30.0px"></div><div class="t" style="left:1417.3px;top:960.8px;font-size:19.7px;line-height:19.7px;color:#262626;">0.5</div>
<div class="t" style="left:1505.8px;top:960.8px;font-size:19.7px;line-height:19.7px;color:#262626;">in.</div>
<div class="t" style="left:1164.3px;top:1068.8px;font-size:19.7px;line-height:19.7px;color:#262626;">Base Plate:</div>
<div class="sel" style="left:1412.3px;top:1064.3px;width:75.0px;height:27.4px;background:#fff"></div><div class="t" style="left:1420.3px;top:1068.8px;font-size:19.7px;line-height:19.7px;color:#262626;">YES</div><svg class="ab" style="left:1468.8px;top:1073.0px" width="10" height="9"><path d="M0.3 0.8 L9.7 0.8 L5 8.6 Z" fill="#111"/></svg>
<div class="t" style="left:1164.3px;top:1108.3px;font-size:19.7px;line-height:19.7px;color:#262626;">Base Plate Width:</div>
<div class="inp" style="left:1412.3px;top:1102.3px;width:87.5px;height:30.4px"></div><div class="t" style="left:1417.3px;top:1108.3px;font-size:19.7px;line-height:19.7px;color:#262626;">10.0</div>
<div class="t" style="left:1505.8px;top:1108.3px;font-size:19.7px;line-height:19.7px;color:#262626;">in.</div>
<div class="t" style="left:1164.3px;top:1148.7px;font-size:19.7px;line-height:19.7px;color:#262626;">Base Plate Length:</div>
<div class="inp" style="left:1412.3px;top:1142.7px;width:87.5px;height:30.3px"></div><div class="t" style="left:1417.3px;top:1148.7px;font-size:19.7px;line-height:19.7px;color:#262626;">8.0</div>
<div class="t" style="left:1505.8px;top:1148.7px;font-size:19.7px;line-height:19.7px;color:#262626;">in.</div>
<div class="t" style="left:1164.3px;top:1189.1px;font-size:19.7px;line-height:19.7px;color:#262626;">Base Plate Thk.:</div>
<div class="inp" style="left:1412.3px;top:1183.3px;width:87.5px;height:30.0px"></div><div class="t" style="left:1417.3px;top:1189.1px;font-size:19.7px;line-height:19.7px;color:#262626;">0.5</div>
<div class="t" style="left:1505.8px;top:1189.1px;font-size:19.7px;line-height:19.7px;color:#262626;">in.</div>
<div class="t" style="left:1164.3px;top:1298.3px;font-size:19.7px;line-height:19.7px;color:#262626;">Custom Label:</div>
<div class="inp" style="left:1412.3px;top:1292.3px;width:148.0px;height:30.4px"></div>
<svg class="ab" style="left:1296.2px;top:1294.5px" width="21" height="21" viewBox="0 0 21 21"><circle cx="10.5" cy="10.5" r="9.2" fill="#def3fb" stroke="#9fb0b3" stroke-width="1.6"/><path d="M7.6 8.2 Q7.8 5.4 10.6 5.4 Q13.4 5.5 13.4 7.9 Q13.4 9.5 11.6 10.4 Q10.6 11 10.6 12.6" fill="none" stroke="#6f8ca6" stroke-width="2.1"/><circle cx="10.6" cy="15.2" r="1.2" fill="#6f8ca6"/></svg>
<div class="t" style="left:1080.0px;width:600px;text-align:center;top:794.8px;font-size:20px;line-height:20px;color:#222">POST TOP PLATE</div>
<div class="t" style="left:1080.7px;width:600px;text-align:center;top:1022.1px;font-size:20px;line-height:20px;color:#222">POST BASE PLATE</div>
<div class="t" style="left:1080.4px;width:600px;text-align:center;top:1249.8px;font-size:20px;line-height:20px;color:#222">ANNOTATIONS</div>
</div>
<div id="sbtrack"></div>
<div id="sbthumb"></div>
<svg class="ab" style="left:1688px;top:130px" width="13" height="9"><path d="M1 7.5 L6.2 1 L11.5 7.5 Z" fill="#505050"/></svg>
<svg class="ab" style="left:1688px;top:1391px" width="13" height="8"><path d="M1 0.8 L11.5 0.8 L6.2 6.5 Z" fill="#999"/></svg>

</body></html>
